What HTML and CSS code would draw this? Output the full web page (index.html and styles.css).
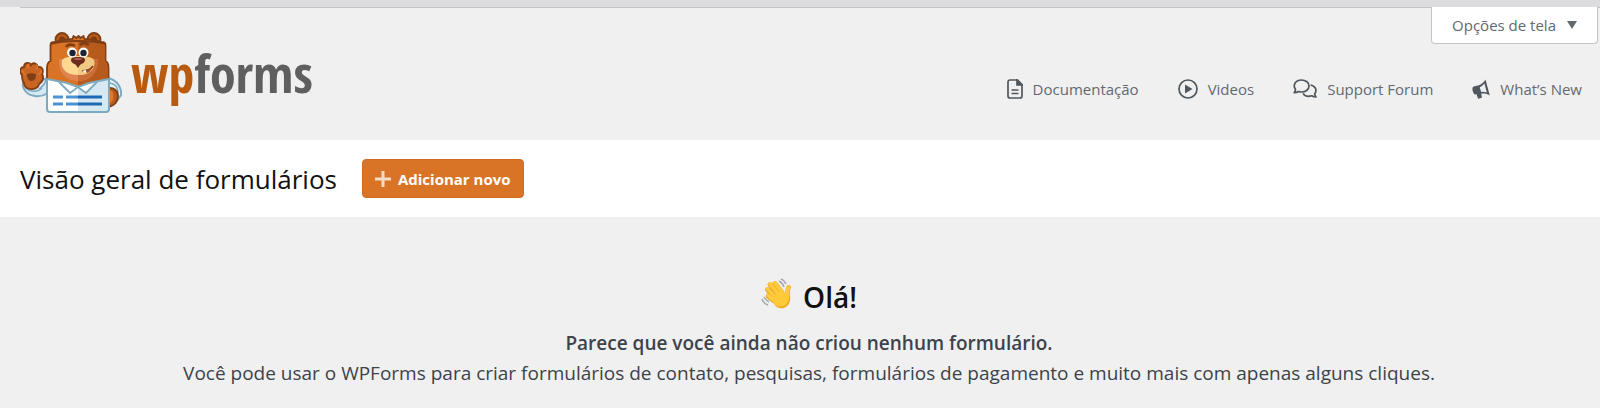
FILE: index.html
```html
<!doctype html>
<html lang="pt-BR">
<head>
  <meta charset="utf-8">
  <meta name="viewport" content="width=device-width, initial-scale=1">
  <title>WPForms</title>
  <link rel="stylesheet" href="styles.css">
</head>
<body>
  <div class="admin-bar"></div>

  <header class="header">
    <div class="screen-meta">
      <button type="button" class="screen-options">
        Opções de tela
        <svg width="10" height="8" viewBox="0 0 10 8" aria-hidden="true"><path d="M0 0h10L5 8z" fill="#646970"/></svg>
      </button>
    </div>

    <div class="header-row">
      <a class="logo" href="#" aria-label="WPForms">
        <svg class="bear" width="102" height="82" viewBox="0 0 102 82" aria-hidden="true">
          <!-- arms -->
          <path d="M3 51c-1 5 3 12 12 13 6 1 10-1 13-3V46l-6 2c-2 3-4 7-9 8-4 0-7-2-10-5z" fill="#d6e8f2" stroke="#7eaabf" stroke-width="2"/>
          <path d="M5 55c4 5 12 6 17 1M26 48c-1 5-4 7-7 9" fill="none" stroke="#7eaabf" stroke-width="1.400"/>
          <path d="M88 46c9 2 14 10 13 17l-5 7-8-8z" fill="#e8f3f8" stroke="#7eaabf" stroke-width="2"/>
          <path d="M90 51c5 1 8 5 8 10" fill="none" stroke="#7eaabf" stroke-width="1.400"/>
          <path d="M88 56c6-1 10 3 10 8s-3 10-10 11z" fill="#b85a1b" stroke="#7f3e13" stroke-width="1.800"/>
          <path d="M89 58c4 0 5 4 4 10l-4 4z" fill="#e27730"/>
          <!-- paw -->
          <path d="M2 43c-3-3-2-8 2-8 0-5 6-5 7-2 2-3 6-2 7 2 4-1 6 3 4 7 3 5-1 9-3 10-1 7-15 7-15-1-2-2-2-5-2-8z" fill="#c96522" stroke="#7f3e13" stroke-width="1.800"/>
          <path d="M5 43c-1-2-3-3-3-5m7-2c-2-1-2-3 0-4m7 5c2-1 2-3 0-4m2 9c2 0 4-1 3-4" fill="none" stroke="#e27730" stroke-width="1.600"/>
          <path d="M7 42c3-1 6-1 9 0 0 4-1 7-5 7-3 0-4-4-4-7z" fill="#7f3e13"/>
          <!-- ears -->
          <circle cx="42" cy="7.500" r="6.500" fill="#b85a1b" stroke="#7f3e13" stroke-width="1.800"/>
          <circle cx="74" cy="7.500" r="6.500" fill="#b85a1b" stroke="#7f3e13" stroke-width="1.800"/>
          <circle cx="42" cy="7.500" r="3" fill="#7f3e13"/>
          <circle cx="74" cy="7.500" r="3" fill="#7f3e13"/>
          <!-- head -->
          <path d="M30.500 13c0-2 2-3 4-3l9-2 9-1 1-3 3 2 2-2 2 2 3-2 1 3 8 1 9 2c2 0 4 1 4 3v16c3 1 3 4 3 7v12L58 56 27 48V36c0-3 1-6 3.500-7z" fill="#d97426" stroke="#7f3e13" stroke-width="1.800" stroke-linejoin="round"/>
          <path d="M58 9l14 1 12.500 3v17c3 1 3 4 3 7v11L58 55z" fill="#b85a1b"/>
          <path d="M31 12c8-3 20-3 27-3s19 0 27 3" fill="none" stroke="#7f3e13" stroke-width="1.800"/>
          <path d="M39 27h38.500c1 12-6 22-19.500 22S38 39 39 27z" fill="#e08552"/>
          <path d="M58 27h19.500c1 12-6 22-19.500 22z" fill="#cb6d39"/>
          <path d="M42 28c3-3 8-4 16-4s13 1 16 4c2 9-5 15-16 15s-18-6-16-15z" fill="#fcd891"/>
          <path d="M58 24c8 0 13 1 16 4 2 9-5 15-16 15z" fill="#f0c983"/>
          <path d="M62 39c5 0 9-2 11-5" fill="none" stroke="#7f3e13" stroke-width="1.700"/>
          <path d="M65 39c1 3 5 2 7-3z" fill="#a54f2c"/>
          <path d="M62 39l4-1v3z" fill="#fff"/>
          <circle cx="52" cy="20.500" r="5" fill="#fff"/>
          <circle cx="63.500" cy="20.500" r="5" fill="#fff"/>
          <circle cx="52.500" cy="21" r="3.200" fill="#1c2430"/>
          <circle cx="63.500" cy="21" r="3.200" fill="#1c2430"/>
          <path d="M46 15c2-3 6-3 9-1M60 13c3-3 6-2 9 0" fill="none" stroke="#7f3e13" stroke-width="2.600"/>
          <path d="M51 28c0-3 4-3 7-3s7 0 7 3-4 4-5 5l-2 3-2-3c-1-1-5-2-5-5z" fill="#6b2b1d"/>
          <ellipse cx="58" cy="27" rx="4" ry="1" fill="#a96052"/>
          <!-- shirt -->
          <path d="M27 47l20 4 11 4 11-4 20-4v30c0 2-1 3-3 3H30c-2 0-3-1-3-3z" fill="#fff"/>
          <path d="M58 55l11-4 20-4v30c0 2-1 3-3 3H58z" fill="#d6e8f2"/>
          <path d="M41 50l17 4-7 7zM75 50l-17 4 7 7z" fill="#fff"/>
          <path d="M39 50l11 11 8-6 8 6 11-11" fill="none" stroke="#7eaabf" stroke-width="1.800"/>
          <path d="M27 47l20 4 11 4 11-4 20-4v30c0 2-1 3-3 3H30c-2 0-3-1-3-3z" fill="none" stroke="#7eaabf" stroke-width="2" stroke-linejoin="round"/>
          <path d="M33 65h10M33 72h10M46 65h12M46 72h12" stroke="#4a94d6" stroke-width="3"/>
          <path d="M58 65h24M58 72h24" stroke="#1e69b4" stroke-width="3"/>
        </svg>
        <span class="wordmark"><span class="wp">wp</span>forms</span>
      </a>

      <nav class="links">
        <a href="#">
          <svg width="16" height="20" viewBox="0 0 16 20" fill="none" stroke="#50575e" stroke-width="1.700" aria-hidden="true"><path d="M3 1h7.500L15 5.500V17a2 2 0 0 1-2 2H3a2 2 0 0 1-2-2V3a2 2 0 0 1 2-2z"/><path d="M10 1v5h5z" fill="#50575e"/><path d="M4.500 11h7M4.500 14.500h7"/></svg>
          Documentação
        </a>
        <a href="#">
          <svg width="20" height="20" viewBox="0 0 20 20" aria-hidden="true"><circle cx="10" cy="10" r="9" fill="none" stroke="#50575e" stroke-width="1.700"/><path d="M7 5.500v9l7.500-4.500z" fill="#50575e"/></svg>
          Videos
        </a>
        <a href="#">
          <svg width="24" height="20" viewBox="0 0 24 20" fill="none" stroke="#50575e" stroke-width="1.700" stroke-linejoin="round" aria-hidden="true"><path d="M2.500 10.500C-.5 6 2.500 1 8.500 1 13 1 16 3.700 16 7s-3 6-7.500 6c-1.200 0-2.200-.2-3-.5-1.200.8-2.600 1.200-4.300 1.200.7-1 1.200-2 1.300-3.200z"/><path d="M17.500 6c4.500.6 7 5 4.200 8.800.1 1.200.6 2.200 1.300 3.200-1.700 0-3.100-.4-4.300-1.200-3.500 1-7.200.1-8.700-2.500"/></svg>
          Support Forum
        </a>
        <a href="#">
          <svg width="18" height="20" viewBox="0 0 18 20" aria-hidden="true"><path d="M1.500 7.500L6 6.400c3-.8 6-3 7.500-6l4.300 16c-3-1.700-6-2.200-8.500-1.700l.6 4-3.800 1-1.600-4.500-1.700.2C.5 14 -.5 8.500 1.500 7.500z" fill="#50575e"/><path d="M7.800 8.200c2-.9 3.600-2.300 4.600-3.700l2.400 9c-1.700-.6-3.500-.8-5.700-.5z" fill="#f0f0f0"/></svg>
          What’s New
        </a>
      </nav>
    </div>
  </header>

  <div class="title-bar">
    <h1>Visão geral de formulários</h1>
    <a class="add-new" href="#">
      <svg width="16" height="16" viewBox="0 0 16 16" aria-hidden="true"><path d="M8 0v16M0 8h16" stroke="#f6dcc8" stroke-width="3"/></svg>
      Adicionar novo
    </a>
  </div>

  <main class="empty-state">
    <h2>
      <svg width="32" height="32" viewBox="0 0 32 32" aria-hidden="true">
        <g fill="none" stroke-linecap="round">
          <path d="M7 18l9 7M6.500 11.500l10 10M9 6.500l9 11M14 5.500l7 9" stroke="#e39f1e" stroke-width="4.800"/>
          <path d="M27.500 9.500c-1.500 3-1 6-1 10" stroke="#f2b22a" stroke-width="4.800"/>
          <path d="M7 17.500l9 7M6.500 11l10 10M9 6l9 11M14 5l7 9" stroke="#ffcb3d" stroke-width="3.800"/>
          <path d="M27.300 9.500c-1.500 3-1 6-1.800 10" stroke="#ffcb3d" stroke-width="3.800"/>
        </g>
        <path d="M13 18l8-6 4 4 4 1c0 6-2 10-6 12s-8 0-12-6z" fill="#ffc938"/>
        <path d="M29 16c1 7-1 12-6 14-4 1-7 0-10-4 4 3 7 3 10 2 4-2 5-6 6-12z" fill="#eea820"/>
        <path d="M18 3c2 1 4 3 5 6M20 1c3 1 4 3 5 5M1 21c1 3 3 5 6 6M3 19c1 2 3 4 5 5" fill="none" stroke="#a4a8ac" stroke-width="1.500"/>
      </svg>
      Olá!
    </h2>
    <p><strong>Parece que você ainda não criou nenhum formulário.</strong></p>
    <p>Você pode usar o WPForms para criar formulários de contato, pesquisas, formulários de pagamento e muito mais com apenas alguns cliques.</p>
  </main>
</body>
</html>
```
FILE: styles.css
```css
* {
  box-sizing: border-box;
}

body {
  margin: 0;
  background: #f0f0f0;
  color: #3c434a;
  font-family: "Open Sans", "Noto Sans", sans-serif;
  font-size: 15px;
}

a {
  color: inherit;
  text-decoration: none;
}

h1, h2, p {
  margin: 0;
}

.admin-bar {
  height: 7px;
  background: #dcdcde;
}

.header {
  height: 133px;
}

.screen-meta {
  display: flex;
  justify-content: flex-end;
  height: 1px;
  margin-left: 20px;
  padding-right: 2px;
  background: #c3c4c7;
}

.screen-options {
  display: flex;
  align-items: center;
  gap: 11px;
  height: 37px;
  padding: 0 20px;
  border: 1px solid #c3c4c7;
  border-top: 0;
  border-radius: 0 0 4px 4px;
  background: #fff;
  color: #646970;
  font: inherit;
}

.header-row {
  display: flex;
  justify-content: space-between;
  padding: 24px 18px 0 20px;
}

.logo {
  display: flex;
  gap: 9px;
}

.wordmark {
  margin-top: 11px;
  color: #5f5f5f;
  font-family: "Open Sans Condensed", "Liberation Sans Narrow", "DejaVu Sans Condensed", sans-serif;
  font-size: 52px;
  font-weight: bold;
  line-height: 60px;
}

.wp {
  color: #b85a10;
}

.links {
  display: flex;
  gap: 39px;
  margin-top: 45px;
  height: 24px;
  color: #646970;
}

.links a {
  display: flex;
  align-items: center;
  gap: 10px;
}

.title-bar {
  display: flex;
  align-items: center;
  gap: 25px;
  height: 77px;
  padding: 0 20px;
  background: #fff;
}

.title-bar h1 {
  color: #111;
  font-size: 26px;
  font-weight: 400;
}

.add-new {
  display: flex;
  align-items: center;
  gap: 7px;
  height: 39px;
  padding: 0 12px;
  border: 1px solid #cf6c20;
  border-radius: 4px;
  background: #d97426;
  color: #fff;
  font-weight: 700;
}

.empty-state {
  padding: 58px 0 18px 18px;
  font-size: 19px;
  line-height: 30px;
  text-align: center;
}

.empty-state h2 {
  display: flex;
  justify-content: center;
  gap: 10px;
  margin-bottom: 9px;
  color: #111;
  font-size: 28px;
  font-weight: 600;
  line-height: 44px;
}

.empty-state h2 svg {
  margin-top: 3px;
}

.empty-state strong {
  font-weight: 600;
}
```
